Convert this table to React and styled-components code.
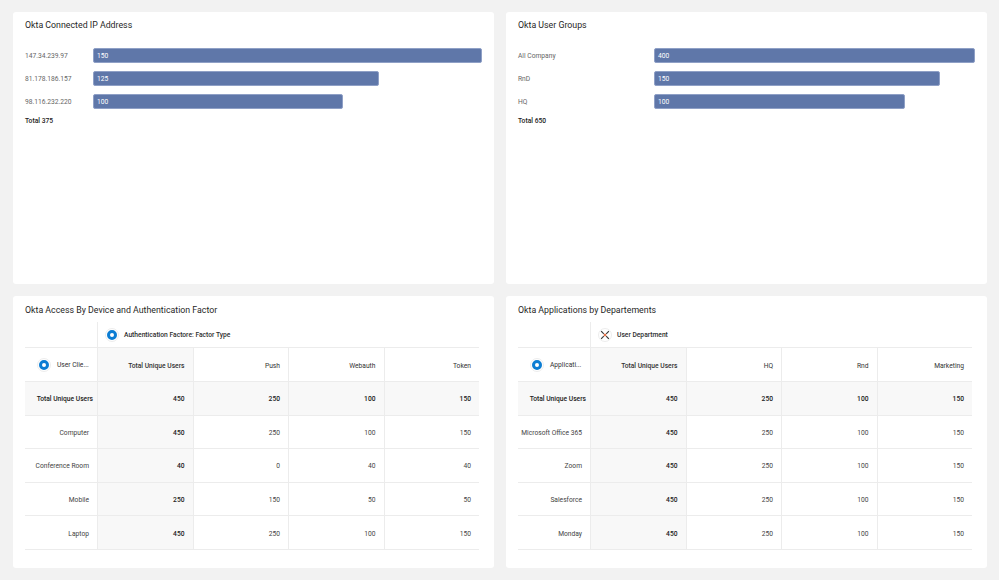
import React from "react";
import styled, { createGlobalStyle } from "styled-components";

const GlobalStyle = createGlobalStyle`
  html, body {
    margin: 0;
    padding: 0;
    background: #f2f2f2;
    font-family: Roboto, "Liberation Sans", Arial, sans-serif;
  }
  * { box-sizing: border-box; }
`;

const ipRows = [
  { label: "147.34.239.97", value: 150, width: 389 },
  { label: "81.178.186.157", value: 125, width: 286 },
  { label: "98.116.232.220", value: 100, width: 250 },
];

const groupRows = [
  { label: "All Company", value: 400, width: 321 },
  { label: "RnD", value: 150, width: 286 },
  { label: "HQ", value: 100, width: 251 },
];

const deviceTable = {
  title: "Okta Access By Device and Authentication Factor",
  pivot: "Authentication Factore: Factor Type",
  pivotIcon: "ring",
  rowHead: "User Clie...",
  columns: ["Total Unique Users", "Push", "Webauth", "Token"],
  rows: [
    ["Total Unique Users", 450, 250, 100, 150],
    ["Computer", 450, 250, 100, 150],
    ["Conference Room", 40, 0, 40, 40],
    ["Mobile", 250, 150, 50, 50],
    ["Laptop", 450, 250, 100, 150],
  ],
};

const appTable = {
  title: "Okta Applications by Departements",
  pivot: "User Department",
  pivotIcon: "cross",
  rowHead: "Applicati...",
  columns: ["Total Unique Users", "HQ", "Rnd", "Marketing"],
  rows: [
    ["Total Unique Users", 450, 250, 100, 150],
    ["Microsoft Office 365", 450, 250, 100, 150],
    ["Zoom", 450, 250, 100, 150],
    ["Salesforce", 450, 250, 100, 150],
    ["Monday", 450, 250, 100, 150],
  ],
};

const RingIcon = () => (
  <Halo>
    <svg width="10" height="10" viewBox="0 0 10 10">
      <circle cx="5" cy="5" r="3.5" fill="none" stroke="#0c7dd3" strokeWidth="3" />
    </svg>
  </Halo>
);

const CrossIcon = () => (
  <Halo>
    <svg width="10" height="10" viewBox="0 0 10 10">
      <g stroke="#3a3a3a" strokeWidth="1.1" strokeLinecap="square">
        <line x1="1.5" y1="1.5" x2="3.4" y2="3.4" />
        <line x1="8.5" y1="1.5" x2="6.6" y2="3.4" />
        <line x1="1.5" y1="8.5" x2="3.4" y2="6.6" />
        <line x1="8.5" y1="8.5" x2="6.6" y2="6.6" />
      </g>
      <g stroke="#e2683c" strokeWidth="1.1">
        <line x1="3.9" y1="3.9" x2="6.1" y2="6.1" />
        <line x1="6.1" y1="3.9" x2="3.9" y2="6.1" />
      </g>
    </svg>
  </Halo>
);

const BarCard = ({ title, rows, total, labelWidth }) => (
  <Card>
    <Title>{title}</Title>
    <Bars>
      {rows.map((row) => (
        <BarRow key={row.label} $labelWidth={labelWidth}>
          <BarLabel>{row.label}</BarLabel>
          <Bar style={{ width: row.width }}>{row.value}</Bar>
        </BarRow>
      ))}
    </Bars>
    <Total>Total {total}</Total>
  </Card>
);

const PivotCard = ({ table }) => (
  <Card>
    <Title $table>{table.title}</Title>
    <Grid>
      <Corner />
      <PivotHead>
        {table.pivotIcon === "ring" ? <RingIcon /> : <CrossIcon />}
        <span>{table.pivot}</span>
      </PivotHead>

      <RowHead>
        <RingIcon />
        <span>{table.rowHead}</span>
      </RowHead>
      {table.columns.map((col, i) => (
        <ColHead key={col} $shade={i === 0} $strong={i === 0}>
          {col}
        </ColHead>
      ))}

      {table.rows.map((row, r) => (
        <React.Fragment key={row[0]}>
          <LabelCell $total={r === 0}>{row[0]}</LabelCell>
          {row.slice(1).map((value, i) => (
            <ValueCell
              key={i}
              $shade={r === 0 || i === 0}
              $strong={r === 0 || i === 0}
            >
              {value}
            </ValueCell>
          ))}
        </React.Fragment>
      ))}
    </Grid>
  </Card>
);

const App = () => (
  <>
    <GlobalStyle />
    <Dashboard>
      <BarCard
        title="Okta Connected IP Address"
        rows={ipRows}
        total={375}
        labelWidth={68}
      />
      <BarCard
        title="Okta User Groups"
        rows={groupRows}
        total={650}
        labelWidth={136}
      />
      <PivotCard table={deviceTable} />
      <PivotCard table={appTable} />
    </Dashboard>
  </>
);

const Dashboard = styled.div`
  display: grid;
  grid-template-columns: 481px 481px;
  grid-template-rows: 272px 272px;
  gap: 12px;
  padding: 12px 12px 12px 13px;
  height: 580px;
  width: 999px;
`;

const Card = styled.div`
  background: #fff;
  border-radius: 3px;
  padding: 7px 15px 0 12px;
  display: flex;
  flex-direction: column;
  overflow: hidden;
`;

const Title = styled.div`
  font-size: 8.8px;
  line-height: 10px;
  color: #1f1f1f;
  margin-top: ${(p) => (p.$table ? "2px" : "1px")};
  margin-bottom: ${(p) => (p.$table ? "7px" : "18px")};
`;

const Bars = styled.div`
  display: flex;
  flex-direction: column;
  gap: 8px;
`;

const BarRow = styled.div`
  display: grid;
  grid-template-columns: ${(p) => p.$labelWidth}px 1fr;
  align-items: center;
  height: 15px;
`;

const BarLabel = styled.div`
  font-size: 6.7px;
  color: #666;
  white-space: nowrap;
  padding-top: 1px;
`;

const Bar = styled.div`
  height: 15px;
  line-height: 15px;
  background: #5f77a9;
  border: 0.5px solid #8fa0c6;
  border-radius: 2px;
  color: #fff;
  font-size: 6.7px;
  padding-left: 3px;
`;

const Total = styled.div`
  margin-top: 7px;
  font-size: 6.7px;
  line-height: 10px;
  font-weight: 500;
  color: #222;
`;

const Grid = styled.div`
  display: grid;
  grid-template-columns: 72px repeat(4, 1fr);
  grid-template-rows: 26px 34px repeat(5, 33.6px);
  font-size: 6.7px;
  line-height: 10px;
  color: #3c3c3c;
`;

const Halo = styled.span`
  display: inline-flex;
  align-items: center;
  justify-content: center;
  width: 14px;
  height: 14px;
  border-radius: 50%;
  border: 1px solid #ededed;
  background: #fff;
  flex-shrink: 0;
`;

const Corner = styled.div`
  border-bottom: 1px solid #ececec;
`;

const PivotHead = styled.div`
  grid-column: 2 / -1;
  display: flex;
  align-items: center;
  gap: 5px;
  padding-left: 7px;
  padding-top: 1px;
  border-left: 1px solid #ececec;
  border-bottom: 1px solid #ececec;
  color: #2e2e2e;
  font-weight: 500;
`;

const RowHead = styled.div`
  display: flex;
  align-items: center;
  gap: 6px;
  padding-left: 12px;
  padding-top: 1px;
  border-bottom: 1px solid #ececec;
  color: #333;
  white-space: nowrap;
`;

const ColHead = styled.div`
  display: flex;
  align-items: center;
  justify-content: flex-end;
  padding: 2px 8px 0 0;
  border-left: 1px solid #ececec;
  border-bottom: 1px solid #ececec;
  background: ${(p) => (p.$shade ? "#f8f8f8" : "#fff")};
  font-weight: ${(p) => (p.$strong ? 500 : 400)};
  color: #333;
  white-space: nowrap;
`;

const LabelCell = styled.div`
  display: flex;
  align-items: center;
  justify-content: flex-end;
  padding-top: 2px;
  padding-right: ${(p) => (p.$total ? "4px" : "8px")};
  border-bottom: 1px solid #ececec;
  background: ${(p) => (p.$total ? "#f8f8f8" : "#fff")};
  font-weight: ${(p) => (p.$total ? 500 : 400)};
  color: ${(p) => (p.$total ? "#222" : "#444")};
  white-space: nowrap;
`;

const ValueCell = styled.div`
  display: flex;
  align-items: center;
  justify-content: flex-end;
  padding: 2px 8px 0 0;
  border-left: 1px solid #ececec;
  border-bottom: 1px solid #ececec;
  background: ${(p) => (p.$shade ? "#f8f8f8" : "#fff")};
  font-weight: ${(p) => (p.$strong ? 500 : 400)};
  color: ${(p) => (p.$strong ? "#222" : "#444")};
`;

export default App;
